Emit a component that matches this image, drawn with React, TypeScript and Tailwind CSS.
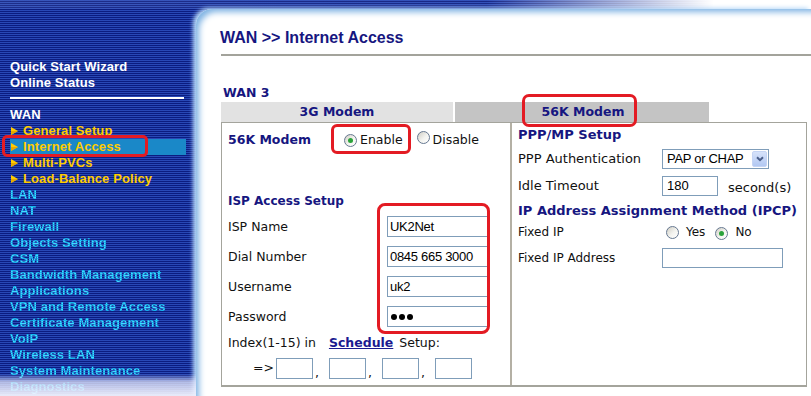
import React from "react";

const Radio = ({ checked }: { checked?: boolean }) => (
  <span className="inline-flex items-center justify-center w-[13px] h-[13px] rounded-full border border-[#667891] bg-[linear-gradient(135deg,#cfcdc4_0%,#f4f4f0_55%,#ffffff_100%)] shrink-0">
    {checked && <span className="w-[5px] h-[5px] rounded-full bg-[#2aa23a]" />}
  </span>
);

const Tri = () => (
  <svg width="7" height="8" viewBox="0 0 7 8" className="shrink-0">
    <polygon points="0,0 7,4 0,8" fill="#ffcc00" />
    <polygon points="0,4 7,4 0,8" fill="#e6a800" />
  </svg>
);

const subs = ["General Setup", "Internet Access", "Multi-PVCs", "Load-Balance Policy"];
const cyan = [
  "LAN",
  "NAT",
  "Firewall",
  "Objects Setting",
  "CSM",
  "Bandwidth Management",
  "Applications",
  "VPN and Remote Access",
  "Certificate Management",
  "VoIP",
  "Wireless LAN",
  "System Maintenance",
  "Diagnostics",
];

export default function App() {
  return (
    <div className="relative w-[811px] h-[396px] overflow-hidden flex flex-col bg-[repeating-linear-gradient(to_bottom,#2848b6_0px,#2848b6_1px,#0b1c80_1px,#0b1c80_2px)] font-['DejaVu_Sans',sans-serif] text-[#111]">
      {/* top band */}
      <div className="h-[9px] shrink-0 bg-[linear-gradient(to_right,rgba(255,255,255,0.08)_0%,rgba(255,255,255,0.05)_60%,#ffffff_88%)]" />
      <div className="flex flex-1 min-h-0">
        {/* Sidebar */}
        <div className="relative w-[196px] shrink-0 pt-[50px] pl-[10px] font-['Liberation_Sans',Arial,sans-serif] font-bold text-[13px] leading-[16px] tracking-[0.1px]">
          <div className="text-white">Quick Start Wizard</div>
          <div className="text-white">Online Status</div>
          <div className="mt-[6px] mb-[8px] h-[2px] w-[174px] bg-white" />
          <div className="text-white">WAN</div>
          {subs.map((s) => (
            <div
              key={s}
              className={
                s === "Internet Access"
                  ? "flex items-center gap-[5px] pl-px w-[176px] bg-[#1a88c8]"
                  : "flex items-center gap-[5px] pl-px"
              }
            >
              <Tri />
              <span className="text-[#ffcc00]">{s}</span>
            </div>
          ))}
          {cyan.map((s) => (
            <div key={s}>
              <span className="bg-[repeating-linear-gradient(to_bottom,#40dcff_0px,#40dcff_1px,#14b8f0_1px,#14b8f0_2px)] bg-clip-text text-transparent">
                {s}
              </span>
            </div>
          ))}
          <div className="absolute left-0 right-0 bottom-0 h-[22px] bg-[linear-gradient(to_bottom,rgba(230,232,250,0)_0%,rgba(225,228,250,0.75)_35%,rgba(245,246,255,0.95)_100%)]" />
        </div>

        {/* Main panel */}
        <div className="flex-1 min-w-0 bg-white rounded-tl-[16px] shadow-[inset_5px_5px_6px_-2px_#7fb3e3,-3px_-1px_4px_#b6d8f8] pt-[20px] pl-[24px]">
          <div className="font-['Liberation_Sans',Arial,sans-serif] font-bold text-[16px] leading-[18px] text-[#161680]">
            WAN &gt;&gt; Internet Access
          </div>
          <div className="mt-[7px] ml-px h-[2px] bg-[#a3a39b]" />
          <div className="mt-[29px] ml-[3px] font-bold text-[12.5px] leading-[16px] text-[#161680]">WAN 3</div>
          {/* tabs */}
          <div className="mt-px ml-px flex h-[20px] font-bold text-[12.5px] text-[#161680]">
            <div className="w-[232px] bg-[#e2e2e2] flex items-center justify-center">3G Modem</div>
            <div className="w-[2px]" />
            <div className="w-[254px] bg-[#c4c4c4] flex items-center justify-center pl-[2px]">56K Modem</div>
          </div>
          {/* box */}
          <div className="ml-px w-[586px] h-[265px] border border-[#a4a49c] border-b-2 flex">
            {/* left col */}
            <div className="w-[290px] border-r-2 border-[#b4b0a4] pl-[6px] text-[12.5px]">
              <div className="mt-[7px] h-[20px] flex items-center">
                <div className="w-[116px] font-bold text-[#161680]">56K Modem</div>
                <Radio checked />
                <span className="ml-[3px]">Enable</span>
                <span className="ml-[14px]">
                  <Radio />
                </span>
                <span className="ml-[3px]">Disable</span>
              </div>
              <div className="mt-[43px] h-[16px] leading-[16px] font-bold text-[12px] text-[#161680]">ISP Access Setup</div>
              <div className="mt-[7px] flex flex-col gap-[9px]">
                {[
                  ["ISP Name", "UK2Net"],
                  ["Dial Number", "0845 665 3000"],
                  ["Username", "uk2"],
                  ["Password", ""],
                ].map(([l, v]) => (
                  <div key={l} className="flex items-center h-[21px]">
                    <div className="w-[159px] pt-[2px]">{l}</div>
                    <div className="w-[102px] h-[21px] border border-[#7f9db9] flex items-center pl-[2px] font-['Liberation_Sans',Arial,sans-serif] text-[13px] tracking-[-0.3px] text-black">
                      {l === "Password" ? (
                        <span className="flex gap-[2px] pl-px">
                          <span className="w-[6px] h-[6px] rounded-full bg-black" />
                          <span className="w-[6px] h-[6px] rounded-full bg-black" />
                          <span className="w-[6px] h-[6px] rounded-full bg-black" />
                        </span>
                      ) : (
                        v
                      )}
                    </div>
                  </div>
                ))}
              </div>
              <div className="mt-[8px] h-[16px] leading-[16px] whitespace-pre">
                Index(1-15) in
                <span className="ml-[13px] font-bold underline text-[#1a1a90]">Schedule</span>
                <span className="ml-[6px]">Setup:</span>
              </div>
              <div className="mt-[7px] h-[21px] flex items-center">
                <span className="ml-[25px] w-[23px]">=&gt;</span>
                {[0, 1, 2, 3].map((i) => (
                  <React.Fragment key={i}>
                    <div className="w-[37px] h-[21px] border border-[#7f9db9]" />
                    {i < 3 && <span className="w-[16px] pl-[2px] pt-[8px] leading-[12px]">,</span>}
                  </React.Fragment>
                ))}
              </div>
            </div>
            {/* right col */}
            <div className="flex-1 pl-[6px] pt-[4px] text-[12.5px]">
              <div className="h-[16px] leading-[16px] font-bold text-[13px] text-[#161680]">PPP/MP Setup</div>
              <div className="mt-[6px] h-[20px] flex items-center">
                <div className="w-[144px] text-[13px]">PPP Authentication</div>
                <div className="w-[107px] h-[20px] border border-[#7f9db9] flex items-center justify-between pl-[4px] pr-px font-['Liberation_Sans',Arial,sans-serif] text-[13px] tracking-[-0.3px] text-black">
                  <span>PAP or CHAP</span>
                  <span className="w-[15px] h-[16px] rounded-[2px] bg-[linear-gradient(to_bottom,#d6e2fa,#b2c8f2)] border border-[#c4d4f4] flex items-center justify-center">
                    <svg width="8" height="6" viewBox="0 0 8 6">
                      <path d="M1 1.2 L4 4.2 L7 1.2" stroke="#4a5f8a" strokeWidth="2" fill="none" />
                    </svg>
                  </span>
                </div>
              </div>
              <div className="mt-[7px] h-[20px] flex items-center">
                <div className="w-[144px] text-[13px]">Idle Timeout</div>
                <div className="w-[56px] h-[20px] border border-[#7f9db9] flex items-center pl-[4px] font-['Liberation_Sans',Arial,sans-serif] text-[13px] text-black">
                  180
                </div>
                <span className="ml-[10px] mt-[3px] text-[13px]">second(s)</span>
              </div>
              <div className="mt-[7px] h-[16px] leading-[16px] font-bold text-[13px] text-[#161680] whitespace-nowrap">
                IP Address Assignment Method (IPCP)
              </div>
              <div className="mt-[5px] h-[16px] flex items-center">
                <div className="w-[148px] text-[12px]">Fixed IP</div>
                <Radio />
                <span className="ml-[7px] text-[12px]">Yes</span>
                <span className="ml-[10px]">
                  <Radio checked />
                </span>
                <span className="ml-[7px] text-[12px]">No</span>
              </div>
              <div className="mt-[8px] h-[20px] flex items-center">
                <div className="w-[144px] text-[12px]">Fixed IP Address</div>
                <div className="w-[121px] h-[20px] border border-[#7f9db9]" />
              </div>
            </div>
          </div>
        </div>
      </div>

      {/* red highlight boxes */}
      <div className="absolute left-[2px] top-[135px] w-[146px] h-[22px] border-[3px] border-[#e31b23] rounded-[5px]" />
      <div className="absolute left-[522px] top-[94px] w-[115px] h-[33px] border-[3px] border-[#e31b23] rounded-[7px]" />
      <div className="absolute left-[331px] top-[124px] w-[80px] h-[30px] border-[3px] border-[#e31b23] rounded-[6px]" />
      <div className="absolute left-[377px] top-[203px] w-[113px] h-[131px] border-[3px] border-[#e31b23] rounded-[8px]" />
    </div>
  );
}
